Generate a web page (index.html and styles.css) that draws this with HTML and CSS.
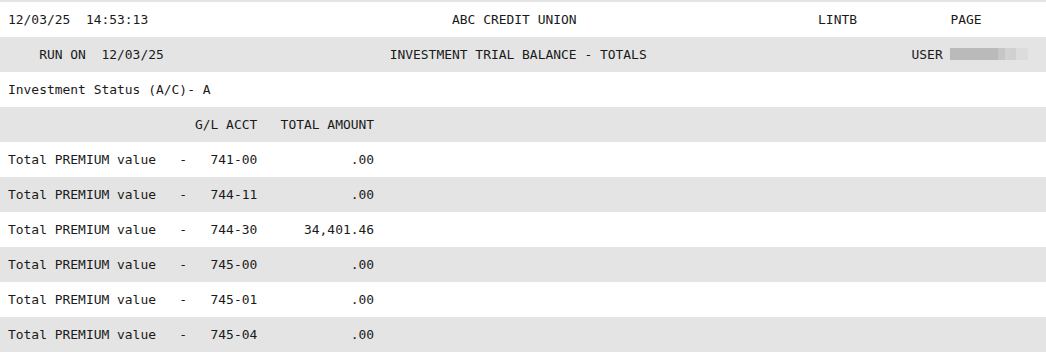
FILE: index.html
```html
<!DOCTYPE html>
<html lang="en">
<head>
<meta charset="utf-8">
<title>Investment Trial Balance - Totals</title>
<link rel="stylesheet" href="styles.css">
</head>
<body>
<main class="report">
<div class="line">12/03/25  14:53:13                                       ABC CREDIT UNION                               LINTB            PAGE</div>
<div class="line shade">    RUN ON  12/03/25                             INVESTMENT TRIAL BALANCE - TOTALS                                  USER <span class="redact"><i class="r1"></i><i class="r2"></i><i class="r3"></i><i class="r4"></i><i class="r5"></i></span></div>
<div class="line">Investment Status (A/C)- A</div>
<div class="line shade">                        G/L ACCT   TOTAL AMOUNT</div>
<div class="line">Total PREMIUM value   -   741-00            .00</div>
<div class="line shade">Total PREMIUM value   -   744-11            .00</div>
<div class="line">Total PREMIUM value   -   744-30      34,401.46</div>
<div class="line shade">Total PREMIUM value   -   745-00            .00</div>
<div class="line">Total PREMIUM value   -   745-01            .00</div>
<div class="line shade">Total PREMIUM value   -   745-04            .00</div>
</main>
</body>
</html>
```
FILE: styles.css
```css
html, body {
  margin: 0;
  padding: 0;
  background: #ffffff;
}

.report {
  display: flex;
  flex-direction: column;
  border-top: 2px solid #e4e4e4;
  font-family: "DejaVu Sans Mono", "Liberation Mono", monospace;
  font-size: 12.95px;
  color: #1a1a1a;
}

.line {
  height: 35px;
  line-height: 35px;
  padding-left: 8px;
  white-space: pre;
  overflow: hidden;
}

.shade {
  background: #e4e4e4;
}

.redact {
  display: inline-flex;
  vertical-align: middle;
  height: 12px;
  margin-top: -3px;
}

.redact i {
  display: block;
  height: 12px;
}

.r1 { width: 48px; background: #bababa; }
.r2 { width: 7px; background: #c6c6c6; }
.r3 { width: 4px; background: #d2d2d2; }
.r4 { width: 7px; background: #d0d0d0; }
.r5 { width: 12px; background: #dcdcdc; }
```
